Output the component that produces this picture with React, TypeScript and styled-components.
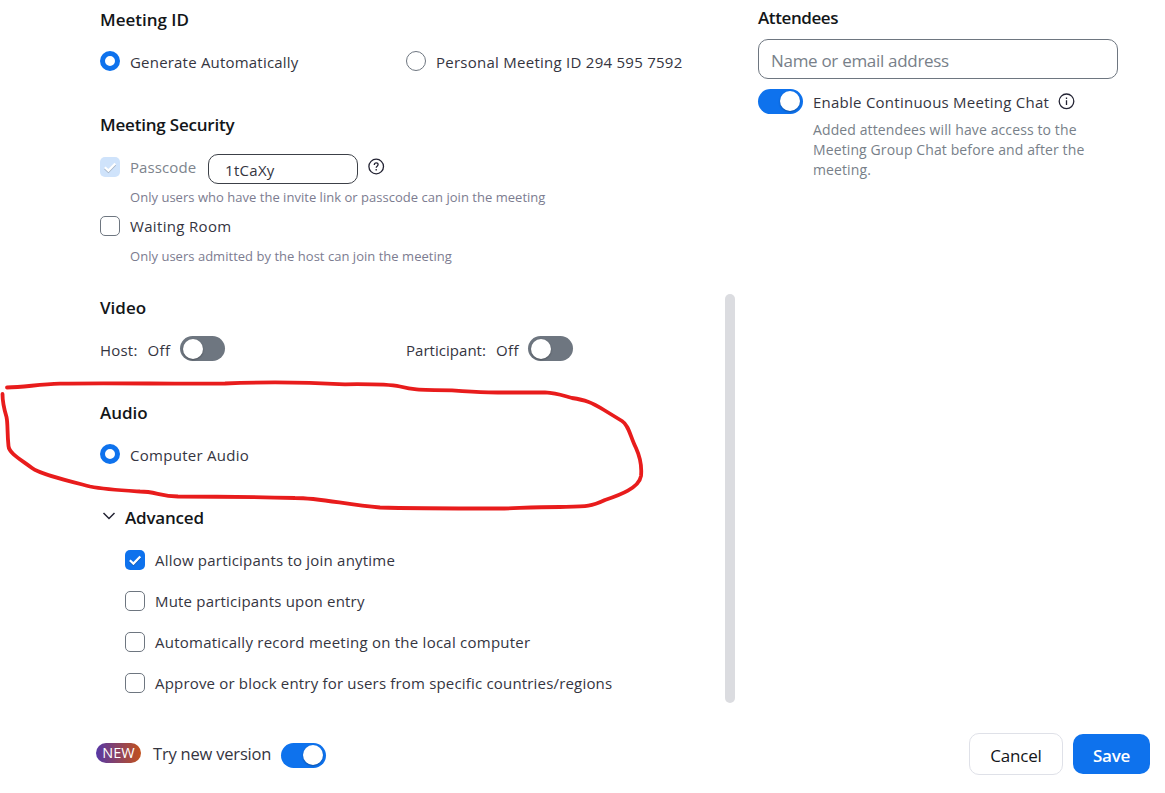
import React, { useState } from "react";
import styled, { createGlobalStyle } from "styled-components";

const GlobalStyle = createGlobalStyle`
  *, *::before, *::after {
    box-sizing: border-box;
  }
  body {
    margin: 0;
    background: #fff;
    font-family: "Open Sans", "Noto Sans", sans-serif;
    overflow: hidden;
  }
`;

const Page = styled.div`
  position: relative;
  display: flex;
  flex-direction: column;
  width: 1165px;
  height: 793px;
  color: #232333;
`;

const Content = styled.div`
  display: flex;
  height: 720px;
`;

const Settings = styled.main`
  width: 725px;
  padding-left: 100px;
`;

const ScrollTrack = styled.div`
  width: 10px;
  padding-top: 294px;
`;

const ScrollThumb = styled.div`
  height: 409px;
  border-radius: 5px;
  background: #dbdce0;
`;

const Sidebar = styled.aside`
  width: 383px;
  padding: 0 0 0 23px;
`;

const Section = styled.section<{ $height: number }>`
  height: ${({ $height }) => $height}px;
`;

const Heading = styled.h3<{ $height?: number; $lift?: number; $tracking?: number }>`
  display: flex;
  align-items: center;
  height: ${({ $height = 40 }) => $height}px;
  margin: 0;
  padding-bottom: ${({ $lift = 2 }) => $lift}px;
  color: #131619;
  font-size: 17px;
  font-weight: 600;
  letter-spacing: ${({ $tracking = 0 }) => $tracking}px;
  white-space: nowrap;
`;

const Row = styled.div<{ $height?: number; $top?: number; $indent?: number }>`
  display: flex;
  align-items: center;
  height: ${({ $height = 42 }) => $height}px;
  margin-top: ${({ $top = 0 }) => $top}px;
  padding-left: ${({ $indent = 0 }) => $indent}px;
`;

const Half = styled.div`
  display: flex;
  align-items: center;
  width: 306px;
`;

const Label = styled.span<{
  $muted?: boolean;
  $tracking?: number;
  $gap?: number;
  $size?: number;
  $drop?: number;
}>`
  margin-left: ${({ $gap = 10 }) => $gap}px;
  padding-top: ${({ $drop = 2 }) => $drop}px;
  color: ${({ $muted }) => ($muted ? "#7d848d" : "#35353f")};
  font-size: ${({ $size = 15 }) => $size}px;
  line-height: 20px;
  letter-spacing: ${({ $tracking = 0.2 }) => $tracking}px;
  white-space: nowrap;
`;

const Hint = styled.p<{ $top: number }>`
  margin: ${({ $top }) => $top}px 0 0 30px;
  color: #7c7c90;
  font-size: 13px;
  line-height: 20px;
  letter-spacing: 0.025px;
  white-space: nowrap;
`;

const Radio = styled.span<{ $checked?: boolean }>`
  flex: none;
  width: 20px;
  height: 20px;
  border: ${({ $checked }) => ($checked ? "5px solid #0e72ed" : "1px solid #6e7680")};
  border-radius: 50%;
  background: #fff;
`;

const Box = styled.span<{ $checked?: boolean; $disabled?: boolean }>`
  display: flex;
  flex: none;
  align-items: center;
  justify-content: center;
  width: 20px;
  height: 20px;
  border: ${({ $checked }) => ($checked ? "none" : "1px solid #6e7680")};
  border-radius: 5px;
  background: ${({ $checked, $disabled }) =>
    $disabled ? "#cfe3fb" : $checked ? "#0e72ed" : "#fff"};
`;

const Switch = styled.button<{ $on: boolean; $gap?: number }>`
  display: flex;
  flex: none;
  align-items: center;
  justify-content: ${({ $on }) => ($on ? "flex-end" : "flex-start")};
  width: 45px;
  height: 25px;
  margin-left: ${({ $gap = 0 }) => $gap}px;
  padding: ${({ $on }) => ($on ? "0 3px 1px 0" : "1px 0 0 3px")};
  border: 0;
  border-radius: 13px;
  background: ${({ $on }) => ($on ? "#0e72ed" : "#6e7680")};
`;

const Knob = styled.span`
  width: 20px;
  height: 20px;
  border-radius: 50%;
  background: #fff;
  box-shadow: 0 1px 2px rgba(0, 0, 0, 0.3);
`;

const PasscodeInput = styled.input`
  align-self: flex-start;
  width: 150px;
  height: 30px;
  padding: 2px 16px 0;
  border: 1px solid #3c4047;
  border-radius: 10px;
  outline: none;
  color: #35353f;
  font-family: inherit;
  font-size: 15px;
  letter-spacing: 0.3px;
`;

const PasscodeLabel = styled.div`
  display: flex;
  align-items: center;
  width: 108px;
`;

const AttendeeInput = styled.input`
  display: block;
  width: 360px;
  height: 40px;
  padding: 3px 12px 0;
  border: 1px solid #6e7680;
  border-radius: 10px;
  outline: none;
  font-family: inherit;
  font-size: 17px;
  letter-spacing: -0.3px;

  &::placeholder {
    color: #787f89;
    opacity: 1;
  }
`;

const ChatNote = styled.p`
  margin: 6px 0 0 55px;
  color: #787f89;
  font-size: 14px;
  line-height: 20px;
  letter-spacing: 0.11px;
  white-space: nowrap;
`;

const NoteLine = styled.span`
  display: block;
`;

const Icon = styled.svg<{ $gap?: number; $lift?: number }>`
  flex: none;
  margin-left: ${({ $gap = 0 }) => $gap}px;
  margin-bottom: ${({ $lift = 0 }) => $lift}px;
  fill: none;
`;

const Footer = styled.footer`
  display: flex;
  align-items: flex-start;
  height: 73px;
  padding: 13px 15px 0 96px;
`;

const VersionRow = styled.div`
  display: flex;
  flex: 1;
  padding-top: 10px;
`;

const VersionLabel = styled(Label)`
  width: 128px;
`;

const NewBadge = styled.span`
  width: 45px;
  height: 20px;
  border-radius: 10px;
  background: linear-gradient(90deg, #5637a6, #c2501c);
  color: #fff;
  font-size: 14.5px;
  line-height: 19px;
  text-align: center;
`;

const Button = styled.button<{ $primary?: boolean }>`
  width: ${({ $primary }) => ($primary ? 77 : 94)}px;
  height: ${({ $primary }) => ($primary ? 40 : 42)}px;
  margin: ${({ $primary }) => ($primary ? "1px 0 0 10px" : 0)};
  padding: 3px 0 0;
  border: ${({ $primary }) => ($primary ? "none" : "1px solid #dfe1e8")};
  border-radius: 10px;
  background: ${({ $primary }) => ($primary ? "#0e72ed" : "#fff")};
  color: ${({ $primary }) => ($primary ? "#fff" : "#131619")};
  font-family: inherit;
  font-size: 17px;
  font-weight: ${({ $primary }) => ($primary ? 650 : 500)};
  letter-spacing: ${({ $primary }) => ($primary ? -0.3 : -0.2)}px;
`;

const Annotation = styled.svg`
  position: absolute;
  top: 0;
  left: 0;
  fill: none;
  stroke: #e81c1c;
  stroke-width: 3.8;
  stroke-linecap: round;
  stroke-linejoin: round;
  pointer-events: none;
`;

const advancedOptions = [
  { label: "Allow participants to join anytime", tracking: 0.21, checked: true },
  { label: "Mute participants upon entry", tracking: 0.19, checked: false },
  { label: "Automatically record meeting on the local computer", tracking: 0.24, checked: false },
  { label: "Approve or block entry for users from specific countries/regions", tracking: 0.18, checked: false },
];

const CheckMark = () => (
  <Icon width="20" height="20" viewBox="0 0 20 20">
    <path d="M4.8 11.6l3.6 3.3 6.9-7.2" stroke="#000" strokeOpacity=".22" strokeWidth="2" />
    <path d="M4.8 10.3l3.6 3.3 6.9-7.2" stroke="#fff" strokeWidth="2.2" />
  </Icon>
);

const Checkbox: React.FC<{ checked?: boolean; disabled?: boolean }> = ({ checked, disabled }) => (
  <Box $checked={checked} $disabled={disabled} role="checkbox" aria-checked={!!checked}>
    {checked && <CheckMark />}
  </Box>
);

const Toggle: React.FC<{ initial?: boolean; gap?: number }> = ({ initial = false, gap }) => {
  const [on, setOn] = useState(initial);
  return (
    <Switch $on={on} $gap={gap} onClick={() => setOn(!on)}>
      <Knob />
    </Switch>
  );
};

const App: React.FC = () => {
  return (
    <>
      <GlobalStyle />
      <Page>
        <Content>
          <Settings>
            <Section $height={105}>
              <Heading>Meeting ID</Heading>
              <Row>
                <Half>
                  <Radio $checked />
                  <Label>Generate Automatically</Label>
                </Half>
                <Radio />
                <Label $tracking={0.26}>Personal Meeting ID 294 595 7592</Label>
              </Row>
            </Section>

            <Section $height={183}>
              <Heading $tracking={-0.2}>Meeting Security</Heading>
              <Row $height={26} $top={9}>
                <PasscodeLabel>
                  <Checkbox checked disabled />
                  <Label $muted $drop={0} $tracking={0.1}>Passcode</Label>
                </PasscodeLabel>
                <PasscodeInput defaultValue="1tCaXy" />
                <Icon $gap={10} $lift={2} width="17" height="17" viewBox="0 0 17 17" stroke="#232333" strokeWidth="1.3">
                  <circle cx="8.2" cy="8.5" r="7.3" />
                  <path d="M6.3 6.9c0-1.2.8-2.100 1.900-2.100s1.900.8 1.900 1.800c0 1.500-1.900 1.600-1.900 3.100M8.200 10.900v1.600" />
                </Icon>
              </Row>
              <Hint $top={7}>Only users who have the invite link or passcode can join the meeting</Hint>
              <Row $height={20} $top={9}>
                <Checkbox />
                <Label $drop={0} $tracking={0.33}>Waiting Room</Label>
              </Row>
              <Hint $top={10}>Only users admitted by the host can join the meeting</Hint>
            </Section>

            <Section $height={105}>
              <Heading>Video</Heading>
              <Row $height={41}>
                <Half>
                  <Label $gap={0} $drop={3}>Host:</Label>
                  <Label $drop={3} $tracking={0.4}>Off</Label>
                  <Toggle gap={9} />
                </Half>
                <Label $gap={0} $drop={3} $tracking={0.03}>Participant:</Label>
                <Label $drop={3} $tracking={0.4}>Off</Label>
                <Toggle gap={9} />
              </Row>
            </Section>

            <Section $height={105}>
              <Heading>Audio</Heading>
              <Row>
                <Radio $checked />
                <Label $tracking={0.28}>Computer Audio</Label>
              </Row>
            </Section>

            <Section $height={206}>
              <Heading $tracking={-0.2}>
                <Icon width="25" height="14" viewBox="0 0 25 14" stroke="#232333" strokeWidth="1.5">
                  <path d="M3.5 3l5.5 5.500L14.500 3" />
                </Icon>
                Advanced
              </Heading>
              {advancedOptions.map((option, index) => (
                <Row key={option.label} $height={41} $top={index === 0 ? 1 : 0} $indent={25}>
                  <Checkbox checked={option.checked} />
                  <Label $tracking={option.tracking} $drop={0}>{option.label}</Label>
                </Row>
              ))}
            </Section>
          </Settings>

          <ScrollTrack>
            <ScrollThumb />
          </ScrollTrack>

          <Sidebar>
            <Heading $height={39} $lift={4} $tracking={-0.4}>Attendees</Heading>
            <AttendeeInput placeholder="Name or email address" />
            <Row $height={25} $top={10}>
              <Toggle initial />
              <Label $drop={1} $tracking={0.25}>Enable Continuous Meeting Chat</Label>
              <Icon $gap={9} width="17" height="17" viewBox="0 0 17 17" stroke="#232333" strokeWidth="1.3">
                <circle cx="8.500" cy="8.300" r="7.300" />
                <path d="M8.500 7.300v4.700M8.500 4.400v1.500" />
              </Icon>
            </Row>
            <ChatNote>
              <NoteLine>Added attendees will have access to the</NoteLine>
              <NoteLine>Meeting Group Chat before and after the</NoteLine>
              <NoteLine>meeting.</NoteLine>
            </ChatNote>
          </Sidebar>
        </Content>

        <Footer>
          <VersionRow>
            <NewBadge>NEW</NewBadge>
            <VersionLabel $gap={12} $size={16.5} $drop={1} $tracking={-0.2}>Try new version</VersionLabel>
            <Toggle initial />
          </VersionRow>
          <Button>Cancel</Button>
          <Button $primary>Save</Button>
        </Footer>

        <Annotation width="1165" height="793" viewBox="0 0 1165 793">
          <path d="M7 387.500C25 387 38 384.500 60 383.700C105 382.500 180 384.300 225 383.500C260 382 310 382.500 345 384.300C370 384 390 384.500 400 386.500C412 389.500 415 390 452 390.300C480 392.500 490 392.800 545 392.300C558 393 564 396 572 398C585 400 591 402 604 410L622 421C629 425.500 630 436 636 448C641 459 642 466 641 476C639 488 620 495 605 500C590 507 587 506.500 560 507C530 507 515 508.500 500 508.500C450 508.500 410 508.500 380 507.500C345 504.500 320 498 295 498C255 497 220 496.500 178 496.500C160 496 155 491.500 140 491.500C115 490 105 489.500 90 486.500C65 480 40 474 32 468C20 459 9 453 8.500 446C7 432 8 424 6.500 417C3.500 407 2.500 402 2.500 394" />
        </Annotation>
      </Page>
    </>
  );
};

export default App;
